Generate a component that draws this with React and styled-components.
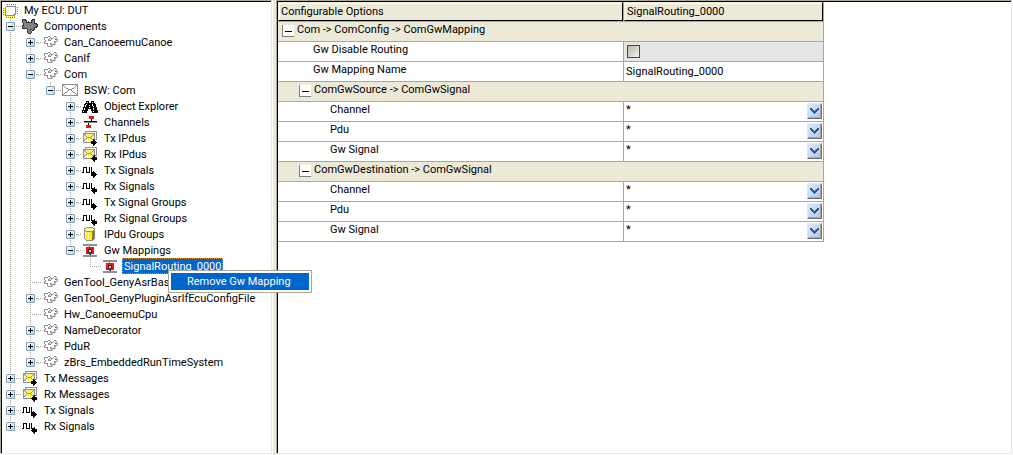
import React, { useState } from 'react';
import styled, { createGlobalStyle, css } from 'styled-components';

const color = {
  face: '#ece9d8',
  shadow: '#aca899',
  dark: '#808080',
  blue: '#0066cc',
};

const GlobalStyle = createGlobalStyle`
  * { box-sizing: border-box; }
  body { margin: 0; background: #fff; }
  body, button, input, select {
    font-family: Roboto, "Liberation Sans", sans-serif;
    font-size: 11px;
    line-height: 16px;
    color: #000;
  }
`;

/* ---------- pixel icons ---------- */

const palette = {
  K: '#000000', D: '#808080', G: '#909090', L: '#c8c8c8', W: '#ffffff',
  Y: '#ffee22', P: '#fff8a0', O: '#8c8400', R: '#ee1111', B: '#405c78', M: '#333333',
};

const art = {
  chip: [
    '................',
    '................',
    '.....O.O.O.O.O..',
    '.....Y.Y.Y.Y.Y..',
    '....GGGGGGGGGG..',
    '...GWWWWWWWWWGYO',
    '.OYGWWWWWWWWWG..',
    '...GWWWWWWWWWGYO',
    '.OYGWWWWWWWWWG..',
    '...GWWWWWWWWWGYO',
    '.OYGWWWWWWWWWG..',
    '...GWWWWWWWWLGYO',
    '.OYGWWWWWWWLGG..',
    '...GGGGGGGGGG...',
    '....Y.Y.Y.Y.Y...',
    '....O.O.O.O.O...',
  ],
  puzzleDark: [
    '................',
    'MMMM......MMM...',
    'MDDMM....MMDM...',
    'MDDDM.M..MDDM...',
    'MDDDMMMMMMDDM...',
    '.MDDDDDDDDDDMMM.',
    '.MDDDDDDDDDDDDMM',
    'MMDDDDDDDDDDDDDM',
    'MDDDDDDDDDDDDDMM',
    'MDDDDDDDDDDDMMM.',
    'MMMMMDDDDDDDM...',
    '.....MDDMMDMM...',
    '.....MDDM.MM....',
    '.....MDDDM......',
    '.....MDDDM......',
    '......MMM.......',
  ],
  puzzle: [
    '................',
    '................',
    '......GG....GG..',
    '..GGGGWWG..GWWG.',
    '..GWWWWGLGGWWGL.',
    '..GWWWGL.GWWWGGG',
    '...GWWGGGWWWWWWG',
    '..GGWWWWWWWWGGGL',
    '..GWWWWWWWWWGL..',
    '..GGGGWWGGWWGL..',
    '.....GWWGLGGGL..',
    '.....GWWWGL.....',
    '......GGGGL.....',
    '................',
    '................',
    '................',
  ],
  envelope: [
    '................',
    '................',
    'GGGGGGGGGGGGGGGG',
    'GGWWWWWWWWWWWWGG',
    'GWGWWWWWWWWWWGWG',
    'GWWGWWWWWWWWGWWG',
    'GWWWGGWWWWGGWWWG',
    'GWWWWWGGGGWWWWWG',
    'GWWWWWGWWGWWWWWG',
    'GWWWWGWWWWGWWWWG',
    'GWWGGWWWWWWGGWWG',
    'GWGWWWWWWWWWWGWG',
    'GGWWWWWWWWWWWWGG',
    'GGGGGGGGGGGGGGGG',
    '................',
    '................',
  ],
  binoculars: [
    '................',
    '................',
    '................',
    '....KKK..KKK....',
    '....KWK..KWK....',
    '...KKKKKKKKKK...',
    '..KKWKKKKKWKKK..',
    '..KWKKKWKKWKKK..',
    '..KWKKKKKKKWKK..',
    '.KKKKKKWKKKKKKK.',
    '.KWKKKKKKKKWKKK.',
    '.KWKKK...KKWKKK.',
    'KKKKKK...KKKKKKK',
    'KWKKK.....KWKKKK',
    'KKKKK.....KKKKKK',
    '................',
  ],
  channels: [
    '................',
    '................',
    '.......RRRRR....',
    '.......RRRRR....',
    '.......RRRRR....',
    '.........K......',
    '.........K......',
    '..KKKKKKKKKKKKK.',
    '..GGGGGGGGGGGGG.',
    '......K.........',
    '......K.........',
    '....RRRRR.......',
    '....RRRRR.......',
    '....RRRRR.......',
    '................',
    '................',
  ],
  mailTx: [
    '................',
    '...GGGGGGGGGGGG.',
    '...GWWWWWWWWWWG.',
    '.GGGGGGGGGGGGWG.',
    '.GGYPYPYPYPGGWG.',
    '.GYGYPYPYPGYGWG.',
    '.GPYGPYPYGPYGWG.',
    '.GYPYGGGGPYPGWG.',
    '.GPYGPYPYGPYGWG.',
    '.GYGYPYPYPGKGGG.',
    '.GGYWWYWYWWKK...',
    '.GWWYWWWYKKKKK..',
    '.GGGGGGGGKKKKKK.',
    '.........KKKKK..',
    '...........KK...',
    '...........K....',
  ],
  mailRx: [
    '................',
    '...GGGGGGGGGGGG.',
    '...GWWWWWWWWWWG.',
    '.GGGGGGGGGGGGWG.',
    '.GGYPYPYPYPGGWG.',
    '.GYGYPYPYPGYGWG.',
    '.GPYGPYPYGPYGWG.',
    '.GYPYGGGGPYPGWG.',
    '.GPYGPYPYGPYGWG.',
    '.GYGYPYPYPGGKGG.',
    '.GGYWWYWYWWKK...',
    '.GWWYWWWYWKKKKK.',
    '.GGGGGGGGKKKKKK.',
    '..........KKKKK.',
    '...........KK...',
    '............K...',
  ],
  signalTx: [
    '................',
    '................',
    '................',
    '................',
    '................',
    '.KKKK..K.K......',
    '.K..K..K.K......',
    '.K..K..K.K......',
    '.K..K..K.K......',
    '.K..K..K.K.K....',
    'KK..KKKK.KKKK...',
    '.........KKKKK..',
    '.........KKKKKK.',
    '.........KKKKK..',
    '...........KK...',
    '...........K....',
  ],
  signalRx: [
    '................',
    '................',
    '................',
    '................',
    '................',
    '.KKKK..K.K......',
    '.K..K..K.K......',
    '.K..K..K.K......',
    '.K..K..K.K......',
    '.K..K..K.K..K...',
    'KK..KKKK.KKKK...',
    '..........KKKKK.',
    '.........KKKKKK.',
    '..........KKKKK.',
    '...........KK...',
    '............K...',
  ],
  cylinder: [
    '................',
    '....GGGGGGG.....',
    '..GGPPPPPPPGG...',
    '..GPPWWWWPPPG...',
    '..GGPPPPPPPGD...',
    '..GYGGGGGGGOD...',
    '..GPYYPYYYOOD...',
    '..GPYYPYYYOOD...',
    '..GPYYPYYYOOD...',
    '..GPYYPYYYOOD...',
    '..GPYYPYYYOOD...',
    '..GPYYPYYYOOD...',
    '..GPYYPYYYOOD...',
    '...GYYPYYYOD....',
    '....GGGGGGG.....',
    '................',
  ],
  mapping: [
    '................',
    '................',
    '.GGGGGGGGGGGGGG.',
    '.GGGGGGGGGGGGGG.',
    '.......D........',
    '....RRRRRRRR....',
    '....RRRRRRRR....',
    '....RRMMMMRR....',
    '....RRMLLMRR....',
    '....RRMLLMRR....',
    '....RRMMMMRR....',
    '....RRRRRRRR....',
    '.......DK.......',
    '.GGGGGGGGGGGGGG.',
    '.GGGGGGGGGGGGGG.',
    '................',
  ],
};

const PixelSvg = styled.svg`
  display: block;
  flex: none;
  shape-rendering: crispEdges;
`;

function PixelIcon({ name }) {
  const runs = [];
  art[name].forEach((row, y) => {
    let x = 0;
    while (x < row.length) {
      let end = x + 1;
      while (end < row.length && row[end] === row[x]) end += 1;
      if (row[x] !== '.') {
        runs.push(<rect key={`${x}-${y}`} x={x} y={y} width={end - x} height={1} fill={palette[row[x]]} />);
      }
      x = end;
    }
  });
  return <PixelSvg width="16" height="16" viewBox="0 0 16 16" aria-hidden="true">{runs}</PixelSvg>;
}

/* ---------- frame ---------- */

const Window = styled.div`
  display: flex;
  gap: 3px;
  min-height: 100vh;
  padding: 0 1px 1px 0;
  background: linear-gradient(${color.face}, ${color.face}) 273px 0 / 3px 100% no-repeat #fff;
`;

const Pane = styled.section`
  border: 1px solid;
  border-color: ${color.shadow} ${color.face} ${color.face} ${color.shadow};
  box-shadow: inset 1px 1px 0 #000;
  padding: 1px 0 0 1px;
  background: #fff;
`;

const TreePane = styled(Pane)`
  flex: 0 0 272px;
  margin-right: 1px;
`;

const OptionsPane = styled(Pane)`
  flex: 1;
  min-width: 0;
`;

/* ---------- tree ---------- */

const TreeList = styled.ul`
  list-style: none;
  margin: 0;
  padding: 0;
`;

const TreeRow = styled.li`
  display: flex;
  height: 16px;
  white-space: nowrap;
`;

const dotsDown = `repeating-linear-gradient(to bottom, ${color.shadow} 0 1px, transparent 1px 2px)`;
const dotsAcross = `repeating-linear-gradient(to right, ${color.shadow} 0 1px, transparent 1px 2px)`;

const guides = {
  none: 'none',
  pass: `${dotsDown} 8px 0 / 1px 100% no-repeat`,
  tee: `${dotsDown} 8px 0 / 1px 100% no-repeat, ${dotsAcross} 8px 8px / 12px 1px no-repeat`,
  end: `${dotsDown} 8px 0 / 1px 8px no-repeat, ${dotsAcross} 8px 8px / 12px 1px no-repeat`,
};

const Guide = styled.span`
  flex: 0 0 20px;
  height: 16px;
  padding: 4px;
  background: ${(p) => guides[p.$kind]};
`;

const Expander = styled.button`
  display: block;
  width: 9px;
  height: 9px;
  padding: 0;
  border: 1px solid #7b9ebd;
  border-radius: 1px;
  background:
    linear-gradient(#000, #000) 1px 3px / 5px 1px no-repeat,
    ${(p) => (p.$open ? '' : 'linear-gradient(#000, #000) 3px 1px / 1px 5px no-repeat,')}
    linear-gradient(135deg, #fff, #d8d2c4);
`;

const IconSlot = styled.span`
  flex: 0 0 20px;
`;

const NodeLabel = styled.span`
  position: relative;
  padding: 0 2px;
  line-height: 18px;
  ${(p) => p.$selected && css`
    background: ${color.blue};
    color: #fff;
    outline: 1px dotted #e89030;
    outline-offset: -1px;
  `}
`;

const ContextMenu = styled.div`
  position: absolute;
  z-index: 1;
  top: 12px;
  left: 46px;
  padding: 2px;
  border: 1px solid ${color.shadow};
  background: #fff;
`;

const MenuItem = styled.button`
  display: block;
  width: 138px;
  height: 17px;
  padding: 0 16px;
  border: 0;
  background: ${color.blue};
  color: #fff;
  text-align: left;
  white-space: nowrap;
`;

/* guides: | passes through, t branches, l ends, blank is empty */
const kinds = { '|': 'pass', t: 'tee', l: 'end', ' ': 'none' };

const nodes = [
  ['', '', 'chip', 'My ECU: DUT'],
  ['t', '-', 'puzzleDark', 'Components'],
  ['|t', '+', 'puzzle', 'Can_CanoeemuCanoe'],
  ['|t', '+', 'puzzle', 'CanIf'],
  ['|t', '-', 'puzzle', 'Com'],
  ['||l', '-', 'envelope', 'BSW: Com'],
  ['|| t', '+', 'binoculars', 'Object Explorer'],
  ['|| t', '+', 'channels', 'Channels'],
  ['|| t', '+', 'mailTx', 'Tx IPdus'],
  ['|| t', '+', 'mailRx', 'Rx IPdus'],
  ['|| t', '+', 'signalTx', 'Tx Signals'],
  ['|| t', '+', 'signalRx', 'Rx Signals'],
  ['|| t', '+', 'signalTx', 'Tx Signal Groups'],
  ['|| t', '+', 'signalRx', 'Rx Signal Groups'],
  ['|| t', '+', 'cylinder', 'IPdu Groups'],
  ['|| l', '-', 'mapping', 'Gw Mappings'],
  ['||  l', '', 'mapping', 'SignalRouting_0000', true],
  ['|t', '', 'puzzle', 'GenTool_GenyAsrBase'],
  ['|t', '+', 'puzzle', 'GenTool_GenyPluginAsrIfEcuConfigFile'],
  ['|t', '', 'puzzle', 'Hw_CanoeemuCpu'],
  ['|t', '+', 'puzzle', 'NameDecorator'],
  ['|t', '+', 'puzzle', 'PduR'],
  ['|l', '+', 'puzzle', 'zBrs_EmbeddedRunTimeSystem'],
  ['t', '+', 'mailTx', 'Tx Messages'],
  ['t', '+', 'mailRx', 'Rx Messages'],
  ['t', '+', 'signalTx', 'Tx Signals'],
  ['l', '+', 'signalRx', 'Rx Signals'],
];

function TreeNode({ lines, toggle, icon, label, selected }) {
  const last = lines.length - 1;
  return (
    <TreeRow role="treeitem" aria-level={lines.length + 1} aria-selected={!!selected}>
      {lines.split('').map((ch, i) => (
        <Guide key={i} $kind={kinds[ch]}>
          {i === last && toggle && (
            <Expander $open={toggle === '-'} aria-label={`${toggle === '-' ? 'Collapse' : 'Expand'} ${label}`} />
          )}
        </Guide>
      ))}
      <IconSlot><PixelIcon name={icon} /></IconSlot>
      <NodeLabel $selected={selected}>
        {label}
        {selected && (
          <ContextMenu role="menu">
            <MenuItem role="menuitem">Remove Gw Mapping</MenuItem>
          </ContextMenu>
        )}
      </NodeLabel>
    </TreeRow>
  );
}

/* ---------- options grid ---------- */

const Grid = styled.table`
  width: 546px;
  table-layout: fixed;
  border-collapse: separate;
  border-spacing: 0;
  font-size: 11px;
`;

const NameCol = styled.col`
  width: 346px;
`;

const Cell = styled.td`
  height: 20px;
  padding: 0;
  border: solid ${color.shadow};
  border-width: 0 1px 1px 0;
  background: ${(p) => p.$fill || '#fff'};
  font-weight: normal;
  text-align: left;
  vertical-align: top;
`;

const HeaderText = styled.div`
  height: 19px;
  padding: 1px 2px 0;
  border: 1px solid;
  border-color: ${color.face} #000 #000 ${color.face};
  box-shadow: inset 1px 1px 0 #fff;
`;

const GroupTitle = styled.div`
  display: flex;
  gap: 3px;
  padding-left: ${(p) => (p.$level ? 21 : 4)}px;
`;

const GroupToggle = styled.button`
  width: 12px;
  height: 12px;
  margin-top: 3px;
  padding: 0;
  border: solid ${color.dark};
  border-width: 0 0 1px 1px;
  background: linear-gradient(#000, #000) 2px 6px / 7px 1px no-repeat #fff;
`;

const OptionLabel = styled.label`
  display: block;
  padding-left: ${(p) => (p.$level ? 52 : 35)}px;
`;

const Check = styled.input`
  appearance: none;
  display: block;
  width: 13px;
  height: 13px;
  margin: 3px;
  border: 1px solid #1c5180;
  background: linear-gradient(135deg, #b8b4a8, #f4f2ea);
`;

const NameInput = styled.input`
  display: block;
  width: 100%;
  height: 19px;
  padding: 0 2px;
  border: 0;
  background: none;
`;

const Combo = styled.div`
  display: grid;
  height: 19px;
  > * { grid-area: 1 / 1; }
`;

const ComboSelect = styled.select`
  appearance: none;
  width: 100%;
  height: 14px;
  padding: 0 2px;
  border: 0;
  background: none;
`;

const ComboArrow = styled.span`
  place-self: start end;
  display: grid;
  place-items: center;
  width: 15px;
  height: 16px;
  margin: 1px 1px 0 0;
  border: 1px solid;
  border-color: ${color.face} #716f64 #716f64 ${color.face};
  box-shadow: inset -1px -1px 0 ${color.shadow};
  background: linear-gradient(135deg, #dde8ff, #a4c8f8);
  pointer-events: none;
`;

const chevron = ['BB.....BB', 'BBB...BBB', '.BBB.BBB.', '..BBBBB..', '...BBB...', '....B....'];

function Arrow() {
  return (
    <PixelSvg width="9" height="6" viewBox="0 0 9 6" aria-hidden="true">
      <path
        fill={palette.B}
        d={chevron.flatMap((row, y) => row.split('').map((c, x) => (c === 'B' ? `M${x} ${y}h1v1h-1z` : ''))).join('')}
      />
    </PixelSvg>
  );
}

function Group({ level, children }) {
  return (
    <tr>
      <Cell as="th" scope="rowgroup" colSpan={2} $fill={color.face}>
        <GroupTitle $level={level}>
          <GroupToggle aria-label={`Collapse ${children}`} />
          {children}
        </GroupTitle>
      </Cell>
    </tr>
  );
}

function ComboRow({ id, label }) {
  return (
    <tr>
      <Cell><OptionLabel htmlFor={id} $level={1}>{label}</OptionLabel></Cell>
      <Cell>
        <Combo>
          <ComboSelect id={id}><option>*</option></ComboSelect>
          <ComboArrow><Arrow /></ComboArrow>
        </Combo>
      </Cell>
    </tr>
  );
}

export default function App() {
  const [name, setName] = useState('SignalRouting_0000');
  return (
    <>
      <GlobalStyle />
      <Window>
        <TreePane>
          <TreeList role="tree" aria-label="ECU">
            {nodes.map(([lines, toggle, icon, label, selected], i) => (
              <TreeNode key={i} lines={lines} toggle={toggle} icon={icon} label={label} selected={selected} />
            ))}
          </TreeList>
        </TreePane>
        <OptionsPane>
          <Grid>
            <colgroup><NameCol /><col /></colgroup>
            <thead>
              <tr>
                <Cell as="th" scope="col" $fill={color.face}><HeaderText>Configurable Options</HeaderText></Cell>
                <Cell as="th" scope="col" $fill={color.face}><HeaderText>SignalRouting_0000</HeaderText></Cell>
              </tr>
            </thead>
            <tbody>
              <Group level={0}>{'Com -> ComConfig -> ComGwMapping'}</Group>
              <tr>
                <Cell><OptionLabel htmlFor="disable">Gw Disable Routing</OptionLabel></Cell>
                <Cell $fill="#e5e5e5"><Check id="disable" type="checkbox" /></Cell>
              </tr>
              <tr>
                <Cell><OptionLabel htmlFor="name">Gw Mapping Name</OptionLabel></Cell>
                <Cell><NameInput id="name" value={name} onChange={(e) => setName(e.target.value)} /></Cell>
              </tr>
              <Group level={1}>{'ComGwSource -> ComGwSignal'}</Group>
              <ComboRow id="src-channel" label="Channel" />
              <ComboRow id="src-pdu" label="Pdu" />
              <ComboRow id="src-signal" label="Gw Signal" />
              <Group level={1}>{'ComGwDestination -> ComGwSignal'}</Group>
              <ComboRow id="dst-channel" label="Channel" />
              <ComboRow id="dst-pdu" label="Pdu" />
              <ComboRow id="dst-signal" label="Gw Signal" />
            </tbody>
          </Grid>
        </OptionsPane>
      </Window>
    </>
  );
}
